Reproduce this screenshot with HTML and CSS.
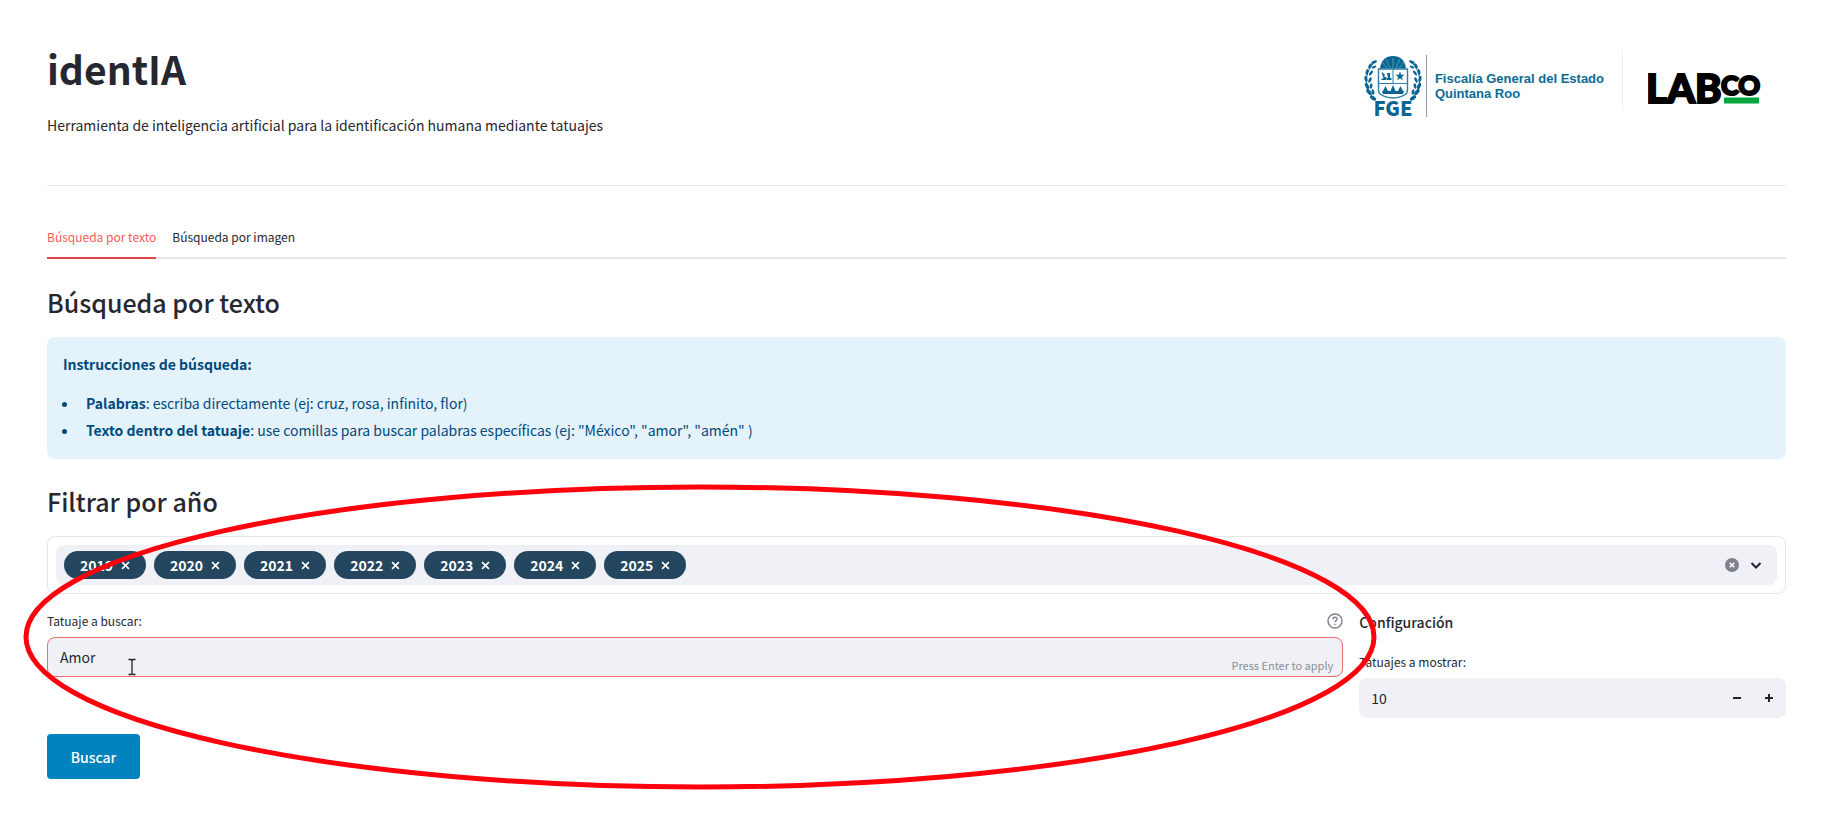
FILE: index.html
```
<!DOCTYPE html>
<html lang="es">
<head>
  <meta charset="UTF-8" />
  <meta name="viewport" content="width=device-width, initial-scale=1.0" />
  <title>identIA</title>
  <link rel="stylesheet" href="styles.css">
</head>
<body>
  <header class="header">
    <div>
      <h1>identIA</h1>
      <p class="subtitle">Herramienta de inteligencia artificial para la identificación humana mediante tatuajes</p>
    </div>
    <div class="logos">
      <div class="fge">
        <svg class="fge-shield" width="58" height="68" viewBox="0 0 58 68" aria-hidden="true">
          <!-- sol -->
          <path d="M16 13.500C17 5 22 1 29 1s12 4 13 12.500z" fill="#0b6593" />
          <path d="M29 13V3M26 13L22 4M32 13l4-9M23 13l-5-6M35 13l5-6" stroke="#7fb3cc" stroke-width="0.600" fill="none" />
          <!-- escudo -->
          <path d="M14.500 14h29v21c0 4-3 7-14.500 8c-11.500-1-14.500-4-14.500-8z" fill="#fff" stroke="#2f7ea6" stroke-width="1.400" />
          <path d="M15 28.500h28M29 14v14.500" stroke="#2f7ea6" stroke-width="1" />
          <path d="M17.500 17l3 2v3h2v3h-5v-1.500h2zM23 18h3v5h1.500v2H23v-2h1z" fill="#0b6593" />
          <path d="M36 16.500l1.200 3.200 3.300.1-2.600 2.100.9 3.300-2.800-1.900-2.800 1.900.9-3.300-2.600-2.100 3.300-.1z" fill="#0b6593" />
          <path d="M19 36l2.500-5 2.500 5zM26.500 36l2.500-6 2.500 6zM34 36l2.500-5 2.500 5z" fill="#0b6593" />
          <path d="M18 36h22l-1 3H19z" fill="#0b6593" />
          <!-- laureles -->
          <g id="laurel" fill="#0b6593">
            <path d="M13 6C4 11 0 24 4 34c1.500 5 4 8 8 10" fill="none" stroke="#0b6593" stroke-width="1" />
            <ellipse cx="10" cy="7" rx="3" ry="1.300" transform="rotate(-25 10 7)" />
            <ellipse cx="6" cy="11" rx="3" ry="1.400" transform="rotate(-60 6 11)" />
            <ellipse cx="10" cy="12" rx="2.500" ry="1.200" transform="rotate(-25 10 12)" />
            <ellipse cx="3" cy="17" rx="3" ry="1.400" transform="rotate(-80 3 17)" />
            <ellipse cx="7" cy="18" rx="2.800" ry="1.300" transform="rotate(-50 7 18)" />
            <ellipse cx="2" cy="24" rx="3.200" ry="1.500" transform="rotate(80 2 24)" />
            <ellipse cx="6" cy="25" rx="2.800" ry="1.400" transform="rotate(-65 6 25)" />
            <ellipse cx="3" cy="31" rx="3.400" ry="1.700" transform="rotate(65 3 31)" />
            <ellipse cx="7" cy="31" rx="2.800" ry="1.400" transform="rotate(-80 7 31)" />
            <ellipse cx="5" cy="37" rx="3.600" ry="1.800" transform="rotate(50 5 37)" />
            <ellipse cx="9" cy="37" rx="2.800" ry="1.400" transform="rotate(80 9 37)" />
            <ellipse cx="9" cy="43" rx="3.600" ry="1.800" transform="rotate(35 9 43)" />
          </g>
          <use href="#laurel" transform="translate(58 0) scale(-1 1)" />
          <text x="29" y="61" text-anchor="middle" class="fge-letters">FGE</text>
        </svg>
        <p class="fge-name">Fiscalía General del Estado<br />Quintana Roo</p>
      </div>
      <div class="labco">
        <svg width="114" height="40" viewBox="0 0 114 40" role="img" aria-label="LABCO">
          <text x="-2" y="30" class="lab">LAB</text>
          <text x="73" y="22" class="co">CO</text>
          <path d="M76 24.500h35v6H76z" fill="#00a63c" />
        </svg>
      </div>
    </div>
  </header>

  <main>
    <nav class="tabs">
      <a href="#texto" class="tab active">Búsqueda por texto</a>
      <a href="#imagen" class="tab">Búsqueda por imagen</a>
    </nav>

    <h2 id="texto">Búsqueda por texto</h2>
    <section class="info">
      <p><strong>Instrucciones de búsqueda:</strong></p>
      <ul>
        <li><strong>Palabras</strong>: escriba directamente (ej: cruz, rosa, infinito, flor)</li>
        <li><strong>Texto dentro del tatuaje</strong>: use comillas para buscar palabras específicas (ej: "México", "amor", "amén" )</li>
      </ul>
    </section>

    <h2 id="filtro">Filtrar por año</h2>
    <div class="filter">
      <div class="multiselect">
        <span class="pill">2019 <button type="button" aria-label="Quitar 2019"><svg viewBox="0 0 8 8"><path d="M1 1l6 6M7 1L1 7" /></svg></button></span>
        <span class="pill">2020 <button type="button" aria-label="Quitar 2020"><svg viewBox="0 0 8 8"><path d="M1 1l6 6M7 1L1 7" /></svg></button></span>
        <span class="pill">2021 <button type="button" aria-label="Quitar 2021"><svg viewBox="0 0 8 8"><path d="M1 1l6 6M7 1L1 7" /></svg></button></span>
        <span class="pill">2022 <button type="button" aria-label="Quitar 2022"><svg viewBox="0 0 8 8"><path d="M1 1l6 6M7 1L1 7" /></svg></button></span>
        <span class="pill">2023 <button type="button" aria-label="Quitar 2023"><svg viewBox="0 0 8 8"><path d="M1 1l6 6M7 1L1 7" /></svg></button></span>
        <span class="pill">2024 <button type="button" aria-label="Quitar 2024"><svg viewBox="0 0 8 8"><path d="M1 1l6 6M7 1L1 7" /></svg></button></span>
        <span class="pill">2025 <button type="button" aria-label="Quitar 2025"><svg viewBox="0 0 8 8"><path d="M1 1l6 6M7 1L1 7" /></svg></button></span>
        <input type="text" class="year-input" aria-labelledby="filtro">
        <button type="button" class="icon-btn" aria-label="Borrar todo">
          <svg width="14" height="14" viewBox="0 0 14 14"><circle cx="7" cy="7" r="7" fill="#7f828e" /><path d="M4.700 4.700l4.600 4.600M9.300 4.700L4.700 9.300" stroke="#fff" stroke-width="1.500" /></svg>
        </button>
        <button type="button" class="icon-btn" aria-label="Abrir lista">
          <svg width="12" height="14" viewBox="0 0 12 14"><path d="M1.500 5L6 9.500 10.500 5" fill="none" stroke="#20222c" stroke-width="2" /></svg>
        </button>
      </div>
    </div>

    <form class="columns">
      <div class="col-main">
        <div class="label-row">
          <label for="tatuaje">Tatuaje a buscar:</label>
          <button type="button" class="icon-btn" aria-label="Ayuda">
            <svg width="16" height="16" viewBox="0 0 16 16" fill="none" stroke="#7d808b" stroke-width="1.400"><circle cx="8" cy="8" r="7" /><path d="M6 6.300C6 5 6.800 4.300 8 4.300s2.100.7 2.100 1.800C10.100 7.600 8 7.600 8 9.300M8 10.700v1.500" /></svg>
          </button>
        </div>
        <div class="text-field">
          <input type="text" id="tatuaje" value="Amor">
          <span class="hint">Press Enter to apply</span>
        </div>
        <button type="button" class="search-btn">Buscar</button>
      </div>
      <div class="col-side">
        <h3>Configuración</h3>
        <label for="cantidad">Tatuajes a mostrar:</label>
        <div class="number-field">
          <input type="number" id="cantidad" value="10">
          <button type="button" aria-label="Menos"><svg width="10" height="10" viewBox="0 0 10 10"><path d="M1 5h8" /></svg></button>
          <button type="button" aria-label="Más"><svg width="10" height="10" viewBox="0 0 10 10"><path d="M1 5h8M5 1v8" /></svg></button>
        </div>
      </div>
    </form>
  </main>

  <svg class="cursor" width="8" height="18" viewBox="0 0 8 18" aria-hidden="true">
    <path d="M0.500 1.500H3L4 2.500L5 1.500H7.500M4 2v14M0.500 16.500H3L4 15.500L5 16.500H7.500" fill="none" stroke="#222" stroke-width="1.300" />
  </svg>
  <svg class="ring" width="1354" height="306" viewBox="0 0 1354 306" aria-hidden="true">
    <ellipse cx="677" cy="153" rx="674" ry="150" fill="none" stroke="#ff000d" stroke-width="5" />
  </svg>
</body>
</html>
```
FILE: styles.css
```
* {
  box-sizing: border-box;
}

body {
  margin: 0;
  padding: 44px 52px 24px 47px;
  position: relative;
  background-color: white;
  color: #262730;
  font-family: "Noto Sans CJK SC", "Noto Sans", sans-serif;
  font-size: 14px;
  line-height: 24px;
}

h1, h2, h3, p, ul {
  margin: 0;
}

button, input {
  font-family: inherit;
  font-size: inherit;
  color: inherit;
}

button {
  padding: 0;
  border: none;
  background: none;
  cursor: pointer;
}

svg {
  display: block;
}

.header {
  display: flex;
  justify-content: space-between;
  align-items: flex-start;
  padding-bottom: 48px;
  border-bottom: 1px solid #e6eaec;
}

h1 {
  margin-bottom: 21px;
  font-size: 39px;
  line-height: 48px;
  font-weight: 700;
}

.logos {
  display: flex;
  align-items: flex-start;
  padding: 5px 24px 0 0;
}

.fge {
  display: flex;
  align-items: flex-start;
  gap: 4px;
  padding: 6px 18px 0 0;
}

.fge-letters {
  font-size: 20px;
  font-weight: 900;
  fill: #0b6593;
}

.fge-name {
  padding: 16px 0 16px 8px;
  border-left: 1px solid #8c9aa3;
  color: #0b6a96;
  font-family: "Liberation Sans", Arial, sans-serif;
  font-size: 13px;
  line-height: 15px;
  font-weight: 700;
}

.labco {
  height: 61px;
  padding: 24px 0 0 25px;
  border-left: 1px solid #eeeeee;
}

.labco text {
  fill: black;
  stroke: black;
  stroke-width: 2px;
  font-family: Lato, sans-serif;
  font-weight: 900;
}

.lab {
  font-size: 40px;
}

.co {
  font-size: 27px;
}

.tabs {
  display: flex;
  gap: 16px;
  margin: 41px 0 25px;
  border-bottom: 2px solid #e6e7ea;
}

.tab {
  margin-bottom: -2px;
  padding-bottom: 10px;
  border-bottom: 2px solid transparent;
  color: #262730;
  font-size: 12px;
  line-height: 20px;
  text-decoration: none;
}

.tab.active {
  border-color: #e0434a;
  color: #ff5a5a;
}

h2 {
  margin: 24px 0 17px;
  font-size: 25px;
  line-height: 36px;
  font-weight: 500;
}

.info {
  padding: 15px 16px;
  border-radius: 8px;
  background-color: #e4f2fc;
  color: #004a7c;
}

.info ul {
  margin-top: 14px;
  padding-left: 16px;
  line-height: 27px;
}

.info li {
  padding-left: 7px;
}

.filter {
  padding: 8px;
  border: 1px solid #e4e6ea;
  border-radius: 8px;
}

.multiselect {
  display: flex;
  align-items: center;
  gap: 8px;
  height: 40px;
  padding: 0 15px 0 8px;
  border-radius: 8px;
  background-color: #f0f1f6;
}

.pill {
  display: flex;
  align-items: center;
  gap: 8px;
  height: 28px;
  padding: 0 16px;
  border-radius: 14px;
  background-color: #24465f;
  color: white;
  font-weight: 700;
}

.pill svg {
  width: 9px;
  height: 9px;
  fill: none;
  stroke: white;
  stroke-width: 1.5;
}

.year-input {
  flex: 1;
  min-width: 0;
  padding: 0;
  border: none;
  outline: none;
  background: none;
}

.multiselect .icon-btn {
  margin-left: 3px;
}

.columns {
  display: flex;
  gap: 16px;
  margin-top: 17px;
}

.col-main {
  flex: 1 1 calc(75% - 16px);
}

.col-side {
  flex: 1 1 calc(25% - 16px);
}

label {
  display: block;
  font-size: 12px;
  line-height: 20px;
}

.label-row {
  display: flex;
  justify-content: space-between;
  align-items: center;
  margin-bottom: 6px;
}

.text-field {
  display: flex;
  align-items: flex-end;
  height: 40px;
  border: 1px solid #ef6b70;
  border-radius: 8px;
  background-color: #f0f1f6;
}

.text-field input,
.number-field input {
  flex: 1;
  min-width: 0;
  height: 100%;
  padding: 0 12px;
  border: none;
  outline: none;
  background: none;
}

.hint {
  padding-right: 9px;
  color: #8b8d97;
  font-size: 11px;
  line-height: 22px;
}

.search-btn {
  width: 93px;
  height: 45px;
  margin-top: 57px;
  border-radius: 4px;
  background-color: #0083bf;
  color: white;
  font-weight: 500;
}

h3 {
  margin-bottom: 19px;
  font-size: 14px;
  line-height: 22px;
  font-weight: 500;
}

.number-field {
  display: flex;
  align-items: center;
  height: 40px;
  margin-top: 6px;
  padding-right: 1px;
  border-radius: 8px;
  background-color: #f0f1f6;
}

.number-field input {
  appearance: textfield;
}

.number-field input::-webkit-inner-spin-button {
  display: none;
}

.number-field button {
  display: flex;
  justify-content: center;
  align-items: center;
  width: 32px;
  height: 40px;
}

.number-field svg {
  fill: none;
  stroke: #20222c;
  stroke-width: 2;
}

/* marks laid over the form */
.cursor {
  position: absolute;
  left: 128px;
  top: 658px;
  pointer-events: none;
}

.ring {
  position: absolute;
  left: 23px;
  top: 484px;
  pointer-events: none;
}
```
